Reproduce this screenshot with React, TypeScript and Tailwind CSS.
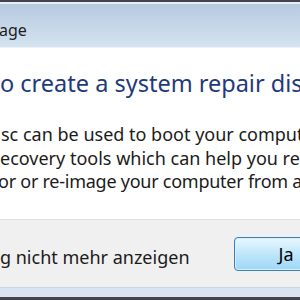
export default function App() {
  return (
    <div className="w-[300px] h-[300px] overflow-hidden flex flex-col bg-white font-['Noto_Sans',sans-serif] text-[#1b1b1b]">
      <div className="h-[2px] shrink-0 bg-[#41464e]" />
      <div className="h-[2px] shrink-0 bg-[#e9eef4]" />
      <div className="h-[43px] shrink-0 bg-gradient-to-b from-[#b6cadf] to-[#d5e3f0] overflow-hidden whitespace-nowrap">
        <div className="pt-[16px] text-[16px] leading-[20px] -ml-[1px] text-[#1e1e1e]">age</div>
      </div>
      <div className="h-[1px] shrink-0 bg-[#edf2f7]" />
      <div className="h-[171px] shrink-0 bg-white overflow-hidden whitespace-nowrap">
        <div className="pt-[19px] text-[23.5px] leading-[32px] text-[#1f3a7c]">o create a system repair disc</div>
        <div className="pt-[24px] text-[18px] leading-[23.5px]">
          <div className="ml-[1px]">sc can be used to boot your computer. It</div>
          <div>ecovery tools which can help you recover</div>
          <div className="-ml-[2px] tracking-[-0.25px]">or or re-image your computer from a system</div>
        </div>
      </div>
      <div className="h-[1px] shrink-0 bg-[#dfdfdf]" />
      <div className="h-[67px] shrink-0 bg-[#f0f0f0] flex items-start overflow-hidden whitespace-nowrap">
        <div className="pt-[25px] text-[18px] leading-[24px] flex-1">g nicht mehr anzeigen</div>
        <div className="mt-[17px] shrink-0 -mr-[38px] w-[104px] h-[34px] rounded-[4px] border border-[#3c7fb1] p-[1px] bg-[#d6effc]">
          <div className="w-full h-full rounded-[2px] bg-gradient-to-b from-[#e6f6fe] via-[#bfe6fa] to-[#9fd8f6] flex items-center justify-center text-[18px] text-black">
            Ja
          </div>
        </div>
      </div>
      <div className="h-[1px] shrink-0 bg-[#cad6e3]" />
      <div className="h-[9px] shrink-0 bg-[#d9e4f0]" />
      <div className="h-[3px] shrink-0 bg-[#41464e]" />
    </div>
  );
}
